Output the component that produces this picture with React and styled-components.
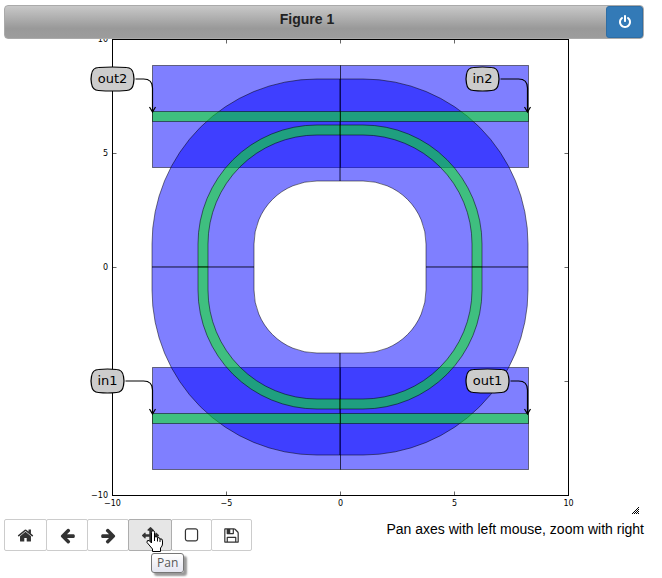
import styled, { createGlobalStyle } from 'styled-components';

const GlobalStyle = createGlobalStyle`
  * {
    box-sizing: border-box;
  }

  body {
    margin: 0;
    padding: 5px 18px 0 4px;
    background-color: #fff;
    color: #000;
    font-family: 'Liberation Sans', Arial, sans-serif;
    font-size: 14px;
    line-height: 20px;
  }
`;

const TitleBar = styled.header`
  display: flex;
  height: 34px;
  border: 1px solid #aaa;
  border-radius: 4px;
  background: linear-gradient(#c8c8c8, #999 70%, #9c9c9c);
`;

const Title = styled.h1`
  flex: 1;
  margin: 0;
  padding: 3px 0 0 3px;
  color: #222;
  font-size: 14px;
  line-height: 20px;
  text-align: center;
`;

const CloseButton = styled.button`
  display: flex;
  align-items: center;
  justify-content: center;
  width: 37px;
  padding: 0;
  border: 1px solid #2e6da4;
  border-radius: 3px;
  background-color: #337ab7;
  color: #fff;
`;

const Canvas = styled.div`
  position: relative;
`;

const Plot = styled.svg`
  display: block;
  width: 100%;
  font-family: 'DejaVu Sans', sans-serif;
`;

const Grip = styled.svg`
  position: absolute;
  right: 5px;
  bottom: 5px;
`;

/* the bottom padding leaves room for the button tooltips */
const Footer = styled.footer`
  display: flex;
  align-items: flex-start;
  justify-content: space-between;
  padding-bottom: 27px;
`;

const Toolbar = styled.div`
  display: flex;
`;

const ToolSlot = styled.div`
  position: relative;
  z-index: ${(props) => (props.$active ? 1 : 0)};

  & + & {
    margin-left: -1px;
  }
`;

const ToolButton = styled.button`
  display: flex;
  align-items: center;
  justify-content: center;
  width: ${(props) => props.$width}px;
  height: 32px;
  padding: 0;
  border: 1px solid ${(props) => (props.$active ? '#adadad' : '#ccc')};
  border-radius: 2px;
  background-color: ${(props) => (props.$active ? '#e6e6e6' : '#fff')};
  color: #333;
`;

const Pointer = styled.svg`
  position: absolute;
  top: 11px;
  left: 18px;
  pointer-events: none;
`;

const Tooltip = styled.span`
  position: absolute;
  top: 34px;
  left: 23px;
  padding: 0 5px;
  border: 1px solid #767676;
  border-radius: 3px;
  background: linear-gradient(#fff, #e4e5f0);
  box-shadow: 3px 3px 2px rgba(0, 0, 0, 0.4);
  color: #575757;
  font-family: 'Open Sans', 'Noto Sans', sans-serif;
  font-size: 12px;
  line-height: 18px;
`;

const Message = styled.output`
  text-align: right;
`;

const icons = {
  power:
    'M1664 896q0 156-61 298t-164 245-245 164-298 61-298-61-245-164-164-245-61-298q0-182 80.5-343t226.5-270q43-32 95.5-25t83.5 50q32 42 24.5 94.5t-49.5 84.5q-98 74-151.5 181t-53.5 228q0 104 40.5 198.5t109.5 163.5 163.5 109.5 198.5 40.5 198.5-40.5 163.5-109.5 109.5-163.5 40.5-198.5q0-121-53.5-228t-151.5-181q-42-32-49.5-84.5t24.5-94.5q31-43 84-50t95 25q146 109 226.5 270t80.5 343zm-640-768v640q0 52-38 90t-90 38-90-38-38-90v-640q0-52 38-90t90-38 90 38 38 90z',
  home: 'M1472 992v480q0 26-19 45t-45 19h-384v-384h-256v384h-384q-26 0-45-19t-19-45v-480q0-1 .5-3t.5-3l575-474 575 474q1 2 1 6zm223-69l-62 74q-8 9-21 11h-3q-13 0-21-7l-692-577-692 577q-12 8-24 7-13-2-21-11l-62-74q-8-10-7-23.5t11-21.5l719-599q32-26 76-26t76 26l244 204v-195q0-14 9-23t23-9h192q14 0 23 9t9 23v408l219 182q10 8 11 21.5t-7 23.5z',
  back: 'M1664 896v128q0 53-32.5 90.5t-84.5 37.5h-704l293 294q38 36 38 90t-38 90l-75 76q-37 37-90 37-52 0-91-37l-651-652q-37-37-37-90 0-52 37-91l651-650q38-38 91-38 52 0 90 38l75 74q38 38 38 91t-38 91l-293 293h704q52 0 84.5 37.5t32.5 90.5z',
  forward:
    'M1600 960q0 54-37 91l-651 651q-39 37-91 37-51 0-90-37l-75-75q-38-38-38-91t38-91l293-293h-704q-52 0-84.5-37.5t-32.5-90.5v-128q0-53 32.5-90.5t84.5-37.5h704l-293-294q-38-36-38-90t38-90l75-75q38-38 90-38 53 0 91 38l651 651q37 35 37 90z',
  pan: 'M1792 896q0 26-19 45l-256 256q-19 19-45 19t-45-19-19-45v-128h-384v384h128q26 0 45 19t19 45-19 45l-256 256q-19 19-45 19t-45-19l-256-256q-19-19-19-45t19-45 45-19h128v-384h-384v128q0 26-19 45t-45 19-45-19l-256-256q-19-19-19-45t19-45l256-256q19-19 45-19t45 19 19 45v128h384v-384h-128q-26 0-45-19t-19-45 19-45l256-256q19-19 45-19t45 19l256 256q19 19 19 45t-19 45-45 19h-128v384h384v-128q0-26 19-45t45-19 45 19l256 256q19 19 19 45z',
  zoom: 'M1312 256h-832q-66 0-113 47t-47 113v832q0 66 47 113t113 47h832q66 0 113-47t47-113v-832q0-66-47-113t-113-47zm288 160v832q0 119-84.5 203.5t-203.5 84.5h-832q-119 0-203.5-84.5t-84.5-203.5v-832q0-119 84.5-203.5t203.5-84.5h832q119 0 203.5 84.5t84.5 203.5z',
  save: 'M512 1536h768v-384h-768v384zm896 0h128v-896q0-14-10-38.5t-20-34.5l-281-281q-10-10-34-20t-39-10v416q0 40-28 68t-68 28h-576q-40 0-68-28t-28-68v-416h-128v1280h128v-416q0-40 28-68t68-28h832q40 0 68 28t28 68v416zm-384-928v-320q0-13-9.5-22.5t-22.5-9.5h-192q-13 0-22.5 9.5t-9.5 22.5v320q0 13 9.5 22.5t22.5 9.5h192q13 0 22.5-9.5t9.5-22.5zm640 32v928q0 40-28 68t-68 28h-1344q-40 0-68-28t-28-68v-1344q0-40 28-68t68-28h928q40 0 88 20t76 48l280 280q28 28 48 76t20 88z',
};

function Icon({ name, size = 17 }) {
  return (
    <svg width={size} height={size} viewBox="0 0 1792 1792" fill="currentColor" aria-hidden="true">
      <path d={icons[name]} />
    </svg>
  );
}

const tools = [
  { name: 'home', label: 'Home', width: 43 },
  { name: 'back', label: 'Back', width: 42 },
  { name: 'forward', label: 'Forward', width: 42 },
  { name: 'pan', label: 'Pan', width: 44, active: true },
  { name: 'zoom', label: 'Zoom', width: 41 },
  { name: 'save', label: 'Download', width: 41 },
];

// 22.8 plot units per data unit
const CX = 340;
const CY = 267;
const STRAIGHT = 23;

const ticks = [-5, 0, 5];
const quarters = ['1 1', '-1 1', '-1 -1', '1 -1'];

const ports = [
  { text: 'out2', x: 91, y: 67, width: 43, tip: 152.5 },
  { text: 'in2', x: 466, y: 67, width: 33, tip: 527.5 },
  { text: 'in1', x: 91, y: 369, width: 33, tip: 152.5 },
  { text: 'out1', x: 466, y: 369, width: 43, tip: 527.5 },
];

function quarterPath(outer, inner) {
  const ro = outer - STRAIGHT;
  const ri = inner - STRAIGHT;
  return `M0 ${-outer}H${STRAIGHT}A${ro} ${ro} 0 0 1 ${outer} ${-STRAIGHT}V0H${inner}V${-STRAIGHT}A${ri} ${ri} 0 0 0 ${STRAIGHT} ${-inner}H0Z`;
}

function Ring({ outer, inner, color }) {
  return quarters.map((scale) => (
    <path
      key={scale}
      d={quarterPath(outer, inner)}
      fill={color}
      transform={`translate(${CX} ${CY}) scale(${scale})`}
    />
  ));
}

function Guide({ y, height, color }) {
  return (
    <>
      <rect x="152.5" y={y} width="188" height={height} fill={color} />
      <rect x="340.5" y={y} width="188" height={height} fill={color} />
    </>
  );
}

function Port({ text, x, y, width, tip }) {
  const mid = y + 12;
  const left = x + 0.5;
  const right = x + width - 0.5;
  const top = y + 0.5;
  const bottom = y + 23.5;
  return (
    <g strokeWidth="1.2">
      <path
        d={`M${right + 2} ${mid}H${tip - 9}Q${tip} ${mid} ${tip} ${mid + 9}V${mid + 33}M${tip - 3} ${mid + 28}L${tip} ${mid + 33}L${tip + 3} ${mid + 28}`}
        fill="none"
        stroke="#000"
      />
      <path
        d={`M${left + 7} ${top}Q${x + width / 2} ${top - 1} ${right - 7} ${top}Q${right - 1} ${top} ${right} ${top + 7}Q${right + 1} ${mid} ${right} ${bottom - 7}Q${right - 1} ${bottom} ${right - 7} ${bottom}Q${x + width / 2} ${bottom + 1} ${left + 7} ${bottom}Q${left + 1} ${bottom} ${left} ${bottom - 7}Q${left - 1} ${mid} ${left} ${top + 7}Q${left + 1} ${top} ${left + 7} ${top}Z`}
        fill="#ccc"
        stroke="#000"
      />
      <text x={x + width / 2} y={mid + 4} fontSize="13" textAnchor="middle">
        {text}
      </text>
    </g>
  );
}

function tickLabel(value) {
  return String(value).replace('-', '\u2212');
}

function Figure() {
  return (
    <Plot viewBox="4 39 640 480" role="img" aria-label="Ring resonator layout">
      <g stroke="#000" strokeOpacity="0.5">
        <Guide y={65.5} height={102} color="rgba(0, 0, 255, 0.5)" />
        <Guide y={367.5} height={102} color="rgba(0, 0, 255, 0.5)" />
        <Ring outer={188} inner={86} color="rgba(0, 0, 255, 0.5)" />
        <Guide y={111.5} height={10} color="rgba(0, 255, 0, 0.5)" />
        <Guide y={413.5} height={10} color="rgba(0, 255, 0, 0.5)" />
        <Ring outer={142} inner={132} color="rgba(0, 255, 0, 0.5)" />
      </g>

      <rect x="112.5" y="39.5" width="456" height="456" fill="none" stroke="#000" />
      <g stroke="#000" strokeOpacity="0.6">
        {ticks.map((tick) => {
          const x = 340.5 + tick * 22.8;
          const y = 267.5 - tick * 22.8;
          return (
            <path key={tick} d={`M${x} 39.5v4M${x} 495.5v-4M112.5 ${y}h4M568.5 ${y}h-4`} />
          );
        })}
      </g>

      <g fontSize="8">
        {[-10, ...ticks, 10].map((tick) => (
          <text key={tick} x={340.5 + tick * 22.8} y="506" textAnchor="middle">
            {tickLabel(tick)}
          </text>
        ))}
        {[-10, 0, 5, 10].map((tick) => (
          <text key={tick} x="108" y={270 - tick * 22.8} textAnchor="end">
            {tickLabel(tick)}
          </text>
        ))}
      </g>

      {ports.map((port) => (
        <Port key={port.text} {...port} />
      ))}
    </Plot>
  );
}

function HandPointer() {
  return (
    <Pointer width="18" height="22" viewBox="0 0 18 22" aria-hidden="true">
      <path
        d="M5.5 13V2.5Q5.5.5 7 .5T8.500 2.500V7Q11 5.500 11.500 8Q13.500 6.500 14 9Q16.500 8 16.500 11V14Q16.500 16 14.500 18V21.500H6.500V19L1 12.500Q.5 10 3 10.500Z"
        fill="#fff"
        stroke="#000"
        strokeLinejoin="round"
      />
      <path d="M8.500 7v4M11.500 8v3.500M14 9v3" stroke="#000" />
    </Pointer>
  );
}

function App() {
  return (
    <main>
      <GlobalStyle />
      <TitleBar>
        <Title>Figure 1</Title>
        <CloseButton type="button" aria-label="Stop Interaction">
          <Icon name="power" size={14} />
        </CloseButton>
      </TitleBar>

      <Canvas>
        <Figure />
        <Grip width="7" height="7" viewBox="0 0 7 7" shapeRendering="crispEdges" aria-hidden="true">
          <path d="M6 0h1v1h-1zM5 1h1v1h-1zM4 2h1v1h-1zM6 2h1v1h-1zM3 3h1v1h-1zM5 3h1v1h-1zM2 4h1v1h-1zM4 4h1v1h-1zM6 4h1v1h-1zM1 5h1v1h-1zM3 5h1v1h-1zM5 5h1v1h-1zM0 6h1v1h-1zM2 6h1v1h-1zM4 6h1v1h-1zM6 6h1v1h-1z" />
        </Grip>
      </Canvas>

      <Footer>
        <Toolbar role="toolbar">
          {tools.map((tool) => (
            <ToolSlot key={tool.name} $active={tool.active}>
              <ToolButton
                type="button"
                aria-label={tool.label}
                $width={tool.width}
                $active={tool.active}
              >
                <Icon name={tool.name} />
              </ToolButton>
              {tool.active && (
                <>
                  <Tooltip role="tooltip">{tool.label}</Tooltip>
                  <HandPointer />
                </>
              )}
            </ToolSlot>
          ))}
        </Toolbar>
        <Message>Pan axes with left mouse, zoom with right</Message>
      </Footer>
    </main>
  );
}

export default App;
